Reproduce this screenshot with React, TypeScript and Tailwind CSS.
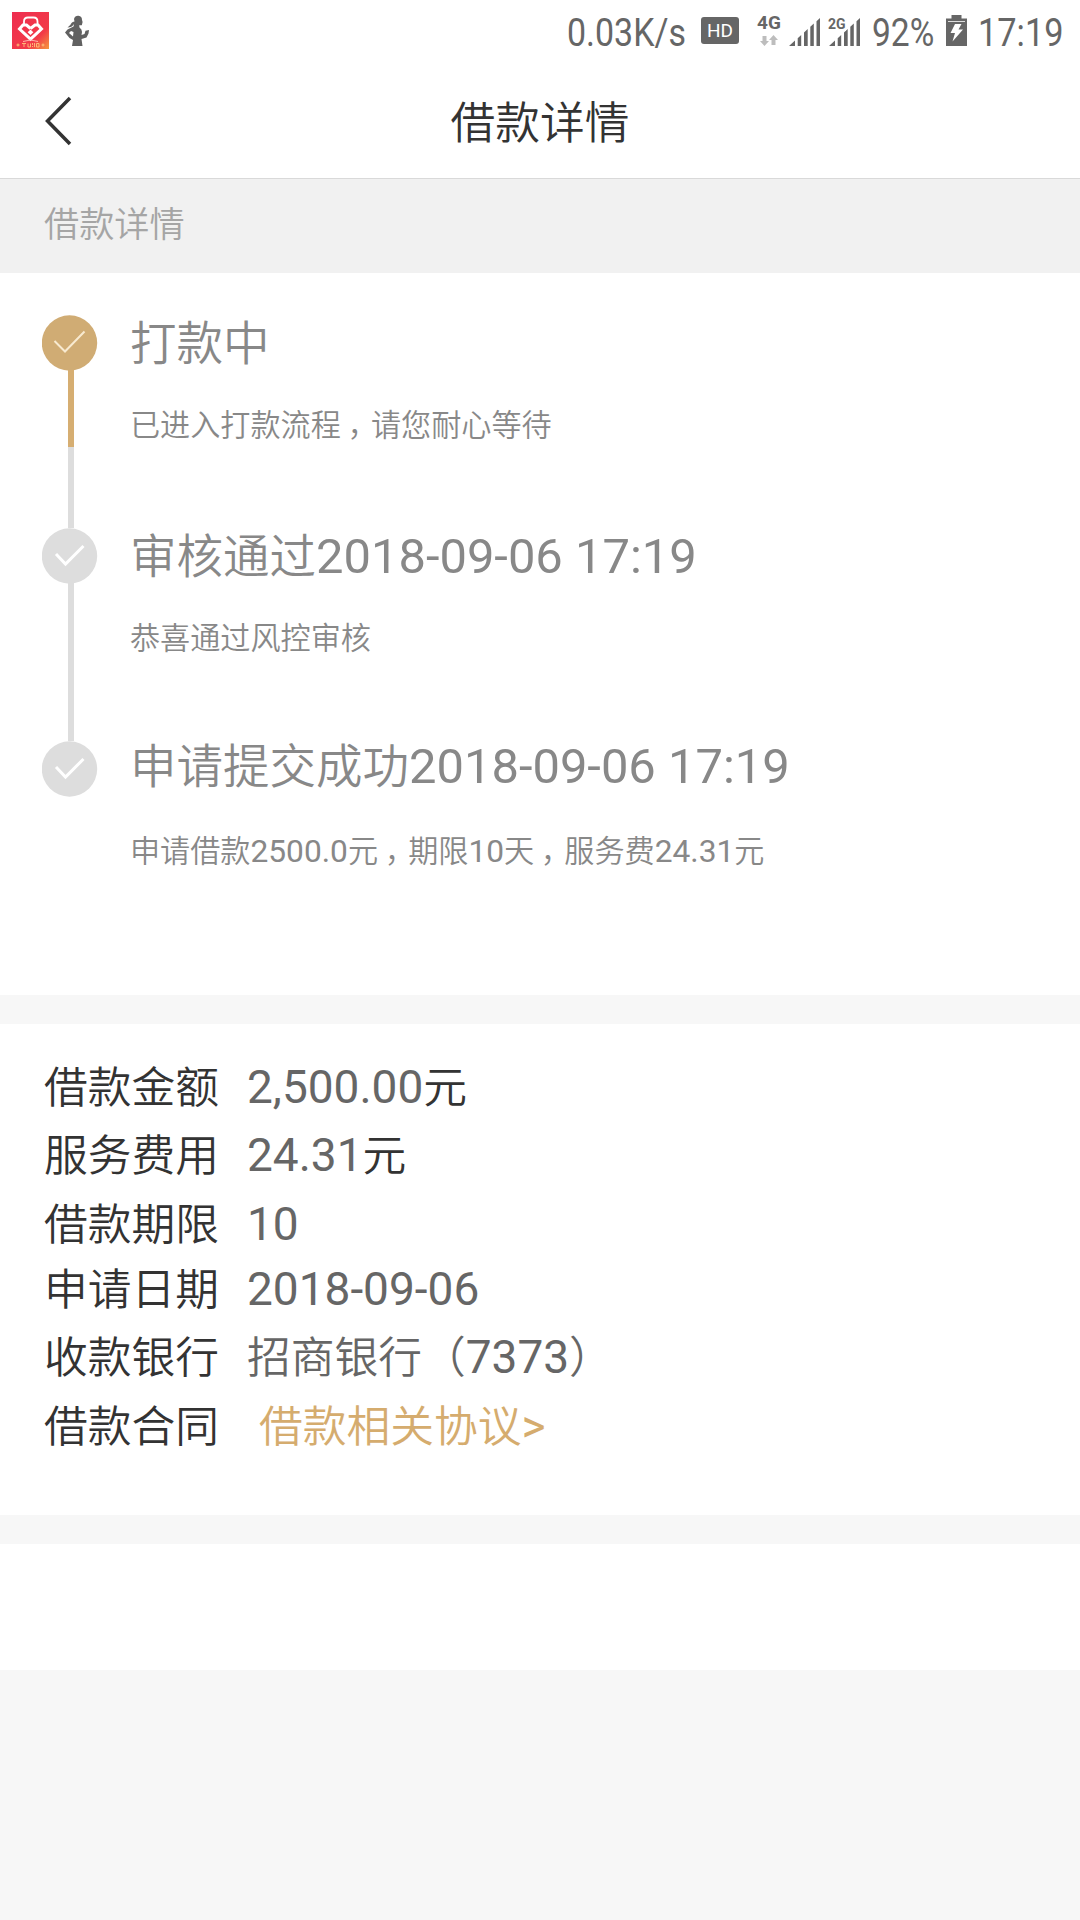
import { Fragment } from 'react'

interface Step {
  title: string
  description: string
  active?: boolean
}

const steps: Step[] = [
  { title: '打款中', description: '已进入打款流程,请您耐心等待', active: true },
  { title: '审核通过2018-09-06 17:19', description: '恭喜通过风控审核' },
  { title: '申请提交成功2018-09-06 17:19', description: '申请借款2500.0元,期限10天,服务费24.31元' },
]

// Chinese glyphs are set slightly smaller than the latin digits beside them
function Mixed({ text }: { text: string }) {
  const parts = text.match(/,(?!\d)|[\x20-\x2b\x2d-\x7e]+(?:,\d[\d.]*)?|[^\x00-\x7f]+/g) ?? []
  return (
    <>
      {parts.map((part, i) => {
        if (part === ',') {
          return (
            <span
              key={i}
              className="pr-[0.28em] pl-[0.22em] text-[0.951em] leading-none [font-feature-settings:'halt'] [font-weight:350]"
            >
              ，
            </span>
          )
        }
        if (part.charCodeAt(0) > 127) {
          return (
            <span key={i} className="text-[0.951em] leading-none [font-weight:350]">
              {part}
            </span>
          )
        }
        return <Fragment key={i}>{part}</Fragment>
      })}
    </>
  )
}

function SignalBars() {
  return (
    <svg className="block h-7 w-[31px]" viewBox="0 0 31 28" fill="#666">
      <path d="M0 28L6 22.5V28ZM8.7 28V20.2L12.2 17V28ZM15 28V14.5L18.7 11V28ZM21.3 28V8.8L24.8 5.6V28ZM27.5 28V3.2L31 0V28Z" />
    </svg>
  )
}

function StatusBar() {
  return (
    <div className="flex h-16 items-start text-[39px] leading-[66px] text-[#666]">
      {/* App notification icon */}
      <svg className="mt-3 ml-3 h-[37px] w-[37px]" viewBox="0 0 37 37" fill="none">
        <defs>
          <linearGradient id="logo" x1="0" y1="0" x2="1" y2="1">
            <stop offset="0" stopColor="#ee2d50" />
            <stop offset="0.7" stopColor="#f23a48" />
            <stop offset="1" stopColor="#f59a3c" />
          </linearGradient>
        </defs>
        <rect width="37" height="37" fill="url(#logo)" />
        <path d="M12 13V9.5Q12 5.5 16 5.5H21.500Q25.500 5.500 25.500 9.500V13" stroke="#fff" strokeWidth="1.8" />
        <path
          d="M18.500 16.500L14.500 13H11L7.500 17L18.500 27.200L29.500 17L26 13H23L18.500 16.500"
          stroke="#fff"
          strokeWidth="3"
        />
        <path d="M18.5 17.5L21.3 20.3L18.5 23.1L15.7 20.3Z" fill="#fff" />
        <path d="M11 29.5L18.5 28L26 29.5" stroke="#ffb3a8" strokeWidth="1" />
        <circle cx="6" cy="33" r="1" stroke="#ffc27a" />
        <circle cx="31" cy="33" r="1" stroke="#ffc27a" />
        <path
          d="M10 31.500H14M12 31.500V35M16 31.500V35H18.500V31.500M20.500 31V33M20.500 34V35M22.500 31V35M24.500 31.500H27V35H24.500Z"
          stroke="#ffc27a"
          strokeWidth="0.9"
        />
      </svg>
      {/* Runner */}
      <svg className="mt-[15px] ml-4 h-8 w-6" viewBox="0 0 24 32" fill="#616161">
        <path d="M9 4Q10 .5 13.5 .8Q17 1.2 17 5L17.6 7L16.8 10.2H14.2L14.5 12.5Q17 14 17 17L16.5 20L19.5 19L20.5 15.8L24 15L23.5 18.5L21.5 22.5L16.5 24L17.5 31H7L8 25L4.5 23L0 17.5L2.5 14.5L8.5 11.5L9 9Q7 12.5 2.5 12.5Q5.5 10.5 6.5 8Q7.5 6.5 9.5 6.5ZM6 16L4 18L8 21.5L8.5 17Z" />
      </svg>

      <span className="ml-[478px] w-[118px] origin-left scale-x-[0.87] whitespace-nowrap">0.03K/s</span>
      <span className="mt-[17px] ml-4 h-[27px] w-[38px] rounded-[3px] bg-[#666] text-center text-[19px] leading-[27px] text-white">
        HD
      </span>
      <div className="mt-[13px] ml-[18px] flex w-6 flex-col items-center">
        <span className="text-[19px] leading-[19px] font-bold">4G</span>
        <svg className="mt-[3px] h-[11px] w-[18px]" viewBox="0 0 18 11" fill="#bdbdbd">
          <path d="M2.5 1H6.5V6H9L4.5 11L0 6H2.5ZM11.5 10H15.5V5H18L13.5 0L9 5H11.5Z" />
        </svg>
      </div>
      <div className="mt-[18px] ml-2">
        <SignalBars />
      </div>
      <div className="relative mt-[18px] ml-[9px]">
        <SignalBars />
        <span className="absolute -top-px -left-px bg-white text-[14px] leading-[14px] font-bold">2G</span>
      </div>
      <span className="ml-3 w-[61px] origin-left scale-x-[0.86] whitespace-nowrap">92%</span>
      <svg className="mt-[15px] ml-[13px] h-[31px] w-[21px]" viewBox="0 0 21 31">
        <path d="M0 3.5H5.5V0H15.5V3.5H21V31H0Z" fill="#666" />
        <path d="M2 6.5H19" stroke="#ddd" />
        <path d="M9 9H15.5L12.5 14.5H17L6.5 26.5L9 18H4.5Z" fill="#fff" />
      </svg>
      <span className="ml-[11px] w-[84px] origin-left scale-x-[0.88] whitespace-nowrap">17:19</span>
    </div>
  )
}

function StepMark({ active }: { active?: boolean }) {
  return (
    <svg
      className={`block h-14 w-14 shrink-0 ${active ? 'text-[#d0ac74]' : 'text-[#ddd]'}`}
      viewBox="0 0 56 56"
      fill="none"
    >
      <circle cx="27.5" cy="28" r="27.7" fill="currentColor" />
      {active ? (
        <path d="M12.5 26L23 36.5L42.5 16.5" stroke="#f8ead0" strokeWidth="2" />
      ) : (
        <path d="M14 26L23.5 36L41.5 18" stroke="#fff" strokeWidth="3" />
      )}
    </svg>
  )
}

function Timeline() {
  return (
    <div className="h-[722px] bg-white pt-[42px] pl-[42px]">
      {steps.map((step, i) => {
        const last = i === steps.length - 1
        return (
          <div key={step.title} className="flex h-[213px]">
            <div className="flex w-14 flex-col">
              <StepMark active={step.active} />
              {!last && (
                <div className="-mt-px ml-[26px] flex w-1.5 grow flex-col bg-[#ddd]">
                  {step.active && <div className="h-[77px] bg-[#d6ae72]" />}
                </div>
              )}
            </div>
            <div className={`ml-8 whitespace-nowrap text-[#888] ${last ? '-mt-0.5' : 'mt-px'}`}>
              <div className="h-14 text-[48.9px] leading-[56px]">
                <Mixed text={step.title} />
              </div>
              <div className={`h-10 text-[31.7px] leading-[40px] ${last ? 'mt-[37px]' : 'mt-[34px]'}`}>
                <Mixed text={step.description} />
              </div>
            </div>
          </div>
        )
      })}
    </div>
  )
}

interface RowProps {
  label: string
  value: string
  unit?: string
  className?: string
}

function Row({ label, value, unit, className = '' }: RowProps) {
  return (
    <div className={`flex h-[65px] text-[46px] leading-[65px] whitespace-nowrap text-[#333] ${className}`}>
      <span className="w-[203px]">
        <Mixed text={label} />
      </span>
      <span className="text-[#666]">
        <Mixed text={value} />
      </span>
      {unit && (
        <span>
          <Mixed text={unit} />
        </span>
      )}
    </div>
  )
}

export default function App() {
  return (
    <div
      lang="zh-CN"
      className="flex h-[1920px] w-[1080px] flex-col overflow-hidden bg-[#f7f7f7] font-[Roboto,'Noto_Sans_CJK_SC',sans-serif]"
    >
      <header className="h-[179px] border-b border-[#d9d9d9] bg-white">
        <StatusBar />
        <div className="flex h-[114px] items-center">
          <svg className="ml-[45px] h-[50px] w-[27px]" viewBox="0 0 27 50" fill="none">
            <path d="M25 2L2.5 25L25 48" stroke="#333" strokeWidth="3.5" />
          </svg>
          <h1 className="mr-[72px] grow pt-1 text-center text-[47px] leading-[60px] text-[#333]">
            <Mixed text="借款详情" />
          </h1>
        </div>
      </header>

      <div className="h-[94px] bg-[#f1f1f1] pt-[22px] pl-11 text-[37px] leading-[48px] text-[#a5a5a5]">
        <Mixed text="借款详情" />
      </div>

      <Timeline />

      <section className="mt-[29px] h-[491px] bg-white pt-[31px] pl-11">
        <Row label="借款金额" value="2,500.00" unit="元" />
        <Row label="服务费用" value="24.31" unit="元" className="mt-[3px]" />
        <Row label="借款期限" value="10" className="mt-1" />
        <Row label="申请日期" value="2018-09-06" />
        <Row label="收款银行" value="招商银行（7373）" className="mt-[3px]" />
        <div className="mt-1 flex h-[65px] text-[46px] leading-[65px] whitespace-nowrap">
          <span className="w-[215px] text-[#333]">
            <Mixed text="借款合同" />
          </span>
          <a className="text-[#d5ac6e]">
            <Mixed text="借款相关协议>" />
          </a>
        </div>
      </section>

      <section className="mt-[29px] h-[126px] bg-white" />
    </div>
  )
}
